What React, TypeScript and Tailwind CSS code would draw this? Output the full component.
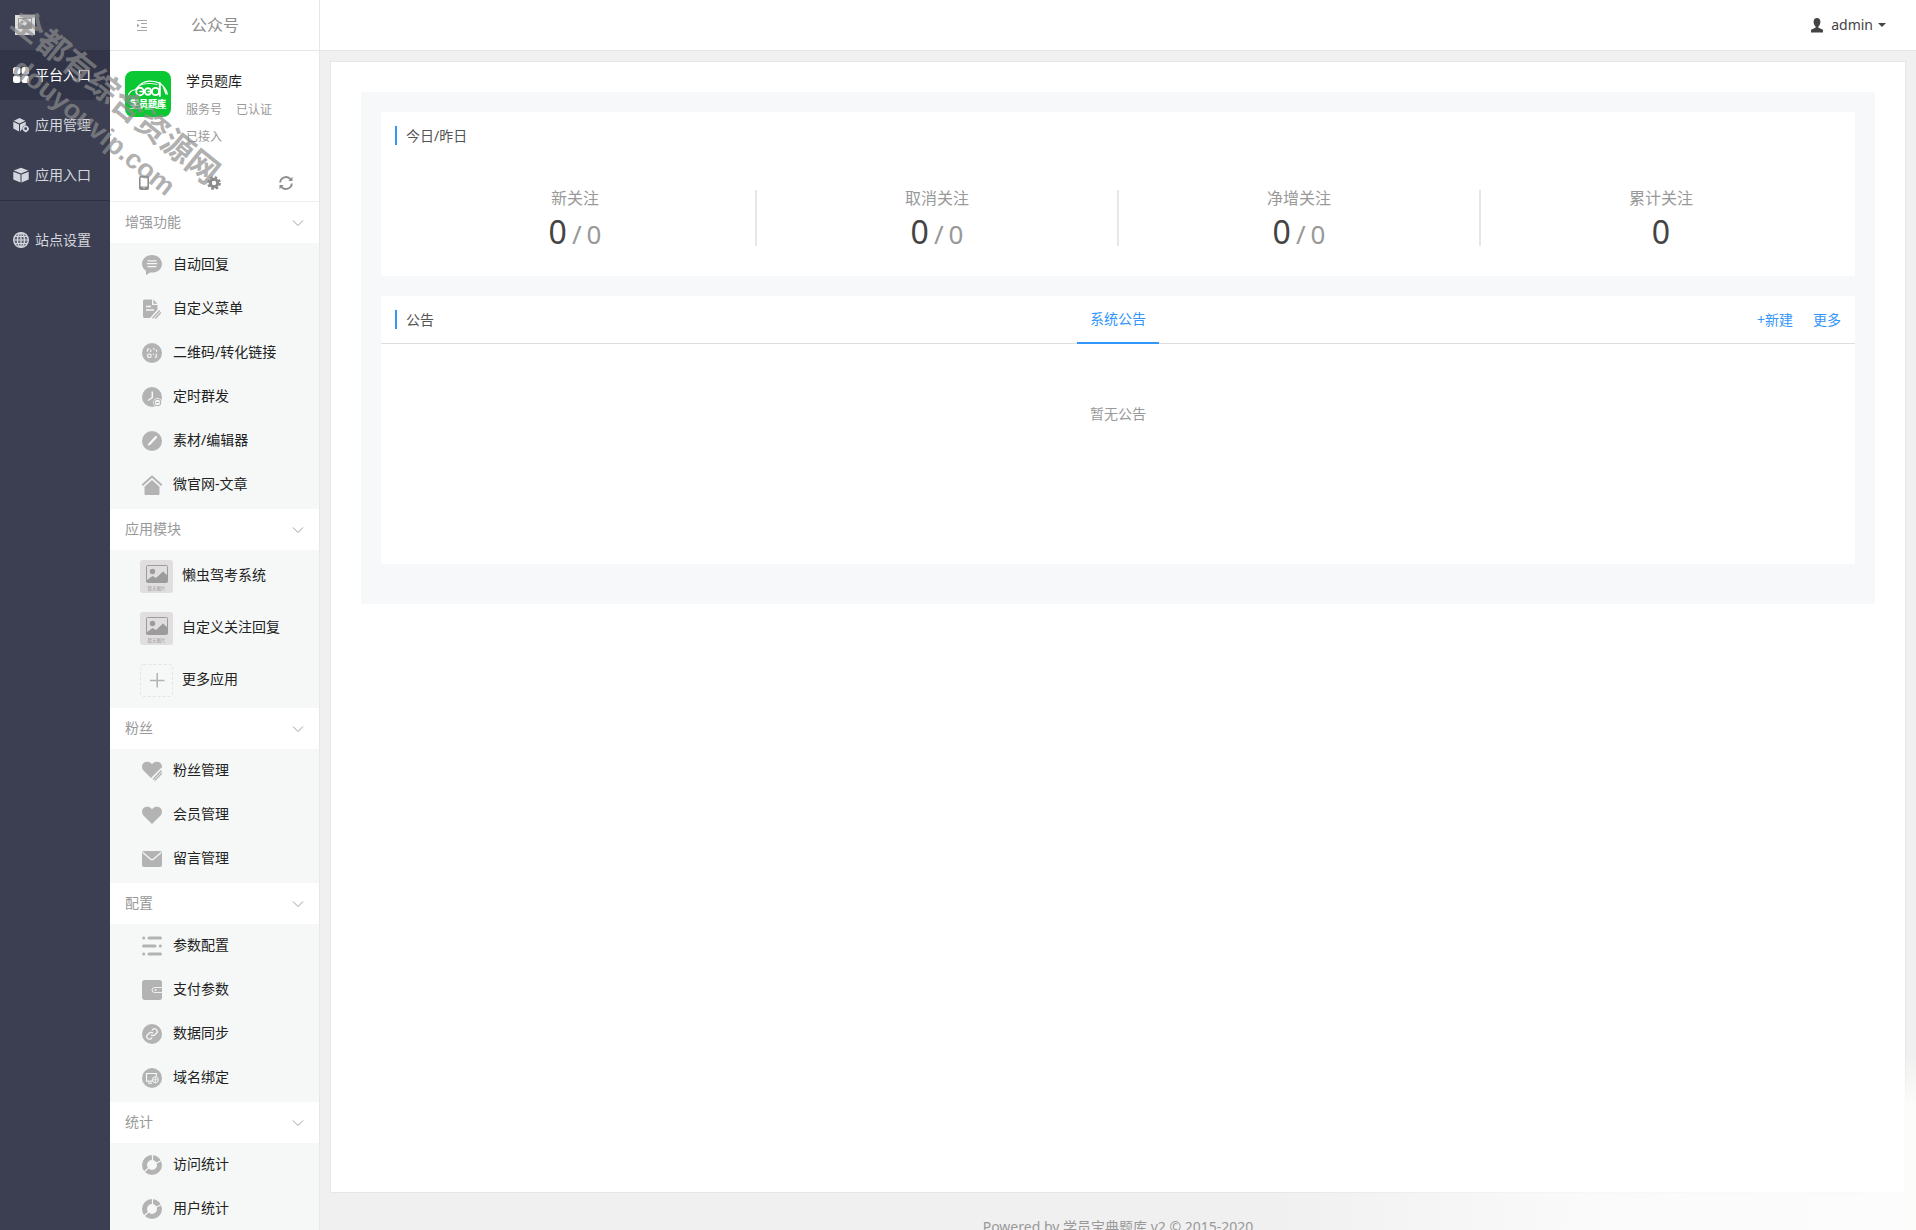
import type { ReactNode } from 'react';

type MenuItem = { label: string; icon: ReactNode };
type MenuSection = { title: string; items: MenuItem[]; tiles?: boolean };

const BG = '#f5f8f7';

function Icon({ children }: { children: ReactNode }) {
  return (
    <svg viewBox="0 0 20 20" className="h-5 w-5 shrink-0" fill="#b3b3b3">
      {children}
    </svg>
  );
}

const ChatIcon = (
  <Icon>
    <path d="M10 0C4.500 0 0 3.900 0 8.900c0 2.900 1.600 5.300 4 6.900V20l4.200-2.500c.6.100 1.200.1 1.800.1 5.500 0 10-3.800 10-8.700S15.500 0 10 0z" />
    <path d="M5.500 5.800h9M4.800 8.700h10.400M5.500 11.600h9" stroke={BG} strokeWidth="1.300" />
  </Icon>
);

const MenuEditIcon = (
  <Icon>
    <path d="M1 2a1.500 1.500 0 0 1 1.500-1.500H10V6h5.500v4.500L8 19H2.500A1.500 1.500 0 0 1 1 17.500z" />
    <path d="M11.300.5l4.200 4.200h-4.200z" />
    <path d="M4 7.500h5M4 11h8" stroke={BG} strokeWidth="1.300" />
    <path d="M17.800 11.500l-7.300 7.700M18.800 13.500l-5.600 6" stroke="#b3b3b3" strokeWidth="1.400" />
  </Icon>
);

const QrIcon = (
  <Icon>
    <circle cx="10" cy="10" r="10" />
    <g fill="none" stroke={BG} strokeWidth="1.200">
      <path d="M5.500 8.800V7.500A1.800 1.800 0 0 1 7.300 5.600M8.700 6.500V9M11 5.500l1.500 1M14.500 6.500v2.300" />
      <rect x="5.700" y="11" width="3.300" height="3.500" rx="1.200" />
      <path d="M14.300 10.800v2.700c0 .8-.5 1.200-1.500 1.200M11.500 10.800v1" />
    </g>
  </Icon>
);

const ClockIcon = (
  <Icon>
    <circle cx="10" cy="10" r="10" />
    <path d="M10.300 4.500v6L6 13.500" fill="none" stroke={BG} strokeWidth="1.500" />
    <circle cx="15.500" cy="15.500" r="4.400" fill={BG} />
    <circle cx="15.500" cy="15.500" r="3.200" fill="none" stroke="#b3b3b3" strokeWidth="1.100" />
    <path d="M13.800 15.500h3.400" stroke="#b3b3b3" strokeWidth="1.100" />
  </Icon>
);

const PencilIcon = (
  <Icon>
    <circle cx="10" cy="10" r="10" />
    <path d="M7.500 13L14 6.200" stroke={BG} strokeWidth="2.400" strokeLinecap="round" />
    <path d="M5.500 14.800l.7-2.300 1.600 1.600z" fill={BG} />
  </Icon>
);

const HouseIcon = (
  <Icon>
    <path d="M.8 9.800L10 1.500l9.200 8.300" fill="none" stroke="#b3b3b3" strokeWidth="2" strokeLinecap="round" />
    <path d="M10 5l7.500 6.700v7a1.300 1.300 0 0 1-1.300 1.300H3.800a1.300 1.300 0 0 1-1.300-1.300v-7z" />
  </Icon>
);

const heart = 'M10 19L1.500 10.500C-.5 8.200-.4 5 1.600 3.100c2.200-2.100 5.800-1.900 7.700.3l.7.900.7-.9c1.900-2.200 5.500-2.400 7.700-.3 2 1.900 2.100 5.100.1 7.400z';

const HeartIcon = (
  <Icon>
    <path d={heart} />
  </Icon>
);

const HeartEditIcon = (
  <Icon>
    <path d={heart} transform="translate(0 -1)" />
    <path d="M21 8.500L10 19.500" stroke={BG} strokeWidth="5" />
    <path d="M19.500 9.500L11 18.500M20 12l-7.300 7.500" stroke="#b3b3b3" strokeWidth="1.400" />
  </Icon>
);

const MailIcon = (
  <Icon>
    <rect y="2" width="20" height="16" rx="2" />
    <path d="M.8 3.500l7.600 6.600c1 .9 2.200.9 3.200 0l7.600-6.600" fill="none" stroke={BG} strokeWidth="1.300" />
  </Icon>
);

const SlidersIcon = (
  <Icon>
    <g stroke="#b3b3b3" strokeWidth="3" strokeLinecap="round">
      <path d="M1.700 2h.1M7 2h11.500M1.500 10H13M18.300 10h.1M1.700 18h.1M7 18h11.500" />
    </g>
  </Icon>
);

const WalletIcon = (
  <Icon>
    <path d="M3 0h14.500A2.500 2.500 0 0 1 20 2.500v15a2.500 2.500 0 0 1-2.500 2.500H3a3 3 0 0 1-3-3V3a3 3 0 0 1 3-3z" />
    <path d="M20 7.500h-7.500a2.500 2.500 0 0 0 0 5H20" fill="none" stroke={BG} strokeWidth=".9" />
    <circle cx="13.500" cy="10" r=".9" fill={BG} />
  </Icon>
);

const LinkIcon = (
  <Icon>
    <circle cx="10" cy="10" r="10" />
    <g transform="translate(10 10) scale(.52) translate(-12 -12)" fill="none" stroke={BG} strokeWidth="2.400">
      <path d="M10 13a5 5 0 0 0 7.540.54l3-3a5 5 0 0 0-7.070-7.070l-1.720 1.710" />
      <path d="M14 11a5 5 0 0 0-7.540-.54l-3 3a5 5 0 0 0 7.070 7.070l1.710-1.710" />
    </g>
  </Icon>
);

const DomainIcon = (
  <Icon>
    <circle cx="10" cy="10" r="10" />
    <path d="M10 13.200H4.500V5.500h9.800v3M6 15.200h4" fill="none" stroke={BG} strokeWidth="1.200" />
    <circle cx="13.300" cy="11.800" r="3" fill="#b3b3b3" stroke={BG} />
    <path d="M10.500 11.800h5.600M13.300 9v5.600" stroke={BG} strokeWidth=".8" />
  </Icon>
);

const DonutIcon = (
  <Icon>
    <circle cx="10" cy="10" r="7.500" fill="none" stroke="#b3b3b3" strokeWidth="5" />
    <path d="M10.500 0v6M13.500 8.500l6-3M6.500 13l-4.500 4" stroke={BG} strokeWidth="1.200" />
  </Icon>
);

function PlaceholderTile() {
  return (
    <svg viewBox="0 0 33 33" className="h-[33px] w-[33px] shrink-0">
      <rect width="33" height="33" rx="3" fill="#e0dedf" />
      <rect x="6.500" y="5.500" width="21" height="17" rx="1" fill="none" stroke="#9c9c9c" />
      <circle cx="12.500" cy="11.500" r="2.700" fill="#9c9c9c" />
      <path d="M6.500 22v-1.500l6-4.500 3.500 2 7-6.500 4.500 4V22z" fill="#9c9c9c" />
      <text x="16.500" y="30" textAnchor="middle" fontSize="4.500" fill="#999">暂无图片</text>
    </svg>
  );
}

function PlusTile() {
  return (
    <svg viewBox="0 0 33 33" className="h-[33px] w-[33px] shrink-0" fill="none">
      <rect x=".5" y=".5" width="32" height="32" rx="3" stroke="#e2e5e4" strokeDasharray="3 2" />
      <path d="M10 16.500h14.500M17.200 9v14.500" stroke="#b3b3b3" strokeWidth="1.500" />
    </svg>
  );
}

const sections: MenuSection[] = [
  {
    title: '增强功能',
    items: [
      { label: '自动回复', icon: ChatIcon },
      { label: '自定义菜单', icon: MenuEditIcon },
      { label: '二维码/转化链接', icon: QrIcon },
      { label: '定时群发', icon: ClockIcon },
      { label: '素材/编辑器', icon: PencilIcon },
      { label: '微官网-文章', icon: HouseIcon },
    ],
  },
  {
    title: '应用模块',
    tiles: true,
    items: [
      { label: '懒虫驾考系统', icon: <PlaceholderTile /> },
      { label: '自定义关注回复', icon: <PlaceholderTile /> },
      { label: '更多应用', icon: <PlusTile /> },
    ],
  },
  {
    title: '粉丝',
    items: [
      { label: '粉丝管理', icon: HeartEditIcon },
      { label: '会员管理', icon: HeartIcon },
      { label: '留言管理', icon: MailIcon },
    ],
  },
  {
    title: '配置',
    items: [
      { label: '参数配置', icon: SlidersIcon },
      { label: '支付参数', icon: WalletIcon },
      { label: '数据同步', icon: LinkIcon },
      { label: '域名绑定', icon: DomainIcon },
    ],
  },
  {
    title: '统计',
    items: [
      { label: '访问统计', icon: DonutIcon },
      { label: '用户统计', icon: DonutIcon },
    ],
  },
];

const stats = [
  { label: '新关注', today: 0, yesterday: 0 },
  { label: '取消关注', today: 0, yesterday: 0 },
  { label: '净增关注', today: 0, yesterday: 0 },
  { label: '累计关注', today: 0 },
];

const navItems = [
  {
    label: '平台入口',
    active: true,
    icon: (
      <g>
        <rect width="7.500" height="7.500" rx="2.500" />
        <rect x="8.500" width="7.500" height="7.500" rx="2.500" />
        <rect y="8.500" width="7.500" height="7.500" rx="2.500" />
        <rect x="8.500" y="8.500" width="7.500" height="7.500" rx="2.500" />
      </g>
    ),
  },
  {
    label: '应用管理',
    icon: (
      <g>
        <path d="M6.500 1l5.800 2.700-5.800 2.800L.8 3.700z" />
        <path d="M.3 4.700L6 7.500v6.900L.3 11.500zM7 7.500l5.700-2.800v3.500l-2.500 1-1.400 3.300L7 14.400z" />
        <circle cx="12.700" cy="11.700" r="2.200" fill="none" stroke="currentColor" strokeWidth="1.600" />
        <path d="M12.700 8.500v1M12.700 14v1.200M9.500 11.700h1M15 11.700h1" stroke="currentColor" strokeWidth="1.600" />
      </g>
    ),
  },
  {
    label: '应用入口',
    icon: (
      <g>
        <path d="M8 .8l7.300 2.800L8 6.500.7 3.600z" />
        <path d="M.3 4.700l7.200 2.900v7.900L.3 12.600zM15.700 4.700L8.500 7.600v7.900l7.200-2.900z" />
      </g>
    ),
  },
];

function NavLink({ label, active, icon }: { label: string; active?: boolean; icon: ReactNode }) {
  return (
    <a
      href="#"
      className={`flex h-[50px] items-center gap-1.5 pl-[13px] ${active ? 'bg-[#313547] text-white' : 'text-[#d5d7de]'}`}
    >
      <svg viewBox="0 0 16 16" className="h-4 w-4 shrink-0" fill="currentColor">
        {icon}
      </svg>
      {label}
    </a>
  );
}

function NavBar() {
  return (
    <nav className="w-[110px] shrink-0 bg-[#3b3f51]">
      <a href="#" aria-label="首页" className="flex h-[50px] items-center pl-[15px]">
        <svg viewBox="0 0 20 20" className="h-5 w-5">
          <rect width="20" height="20" fill="#dedede" />
          <rect x="3.500" y="3.500" width="13" height="10" fill="none" stroke="#9c9c9c" />
          <circle cx="7" cy="7" r="1.600" fill="#9c9c9c" />
          <path d="M4 13v-1l4-2.500 2 1 4-3.500 2.500 2.500V13z" fill="#9c9c9c" />
        </svg>
      </a>
      {navItems.map((item) => (
        <NavLink key={item.label} {...item} />
      ))}
      <div className="border-t border-[#2c3041] pt-3.5">
        <NavLink
          label="站点设置"
          icon={
            <g>
              <circle cx="8" cy="8" r="7.300" fillOpacity=".25" stroke="currentColor" strokeWidth="1.400" />
              <g fill="none" stroke="currentColor" strokeWidth="1.200">
                <ellipse cx="8" cy="8" rx="3.500" ry="7" />
                <path d="M8 .8v14.400M1 8h14M2 4.500h12M2 11.500h12" />
              </g>
            </g>
          }
        />
      </div>
    </nav>
  );
}

function AccountLogo() {
  return (
    <svg viewBox="0 0 46 46" className="h-[46px] w-[46px] shrink-0">
      <rect width="46" height="46" rx="8" fill="#0ac834" />
      <g fill="none" stroke="#fff" strokeLinecap="round">
        <path d="M3.500 24c.5-3 3-4.500 7-5.500C15 13 18 10.500 24 10.200c6-.2 12 2 15 6 1.500 2 3 5 3.300 7" strokeWidth="1.200" />
        <path d="M13 15.500c4-3 12-4 19-2" strokeWidth=".9" />
        <circle cx="15" cy="20.500" r="3.800" strokeWidth="1.900" />
        <circle cx="23" cy="20.500" r="3.200" strokeWidth="1.900" />
        <circle cx="30.500" cy="20.500" r="3.600" strokeWidth="1.900" />
        <path d="M34.800 12v13" strokeWidth="2" />
        <path d="M15 20.500h3.500M23 20.500h4M38.500 16l2.500 7" strokeWidth="1.300" />
        <path d="M5 37.500h12M20 38h8M31 37.500h10" strokeWidth=".7" />
      </g>
      <text x="23" y="35.500" textAnchor="middle" fontSize="9" fontWeight="900" fill="#fff">
        学员题库
      </text>
    </svg>
  );
}

function SideMenu() {
  return (
    <aside className="w-[210px] shrink-0 border-r border-[#e7e7e7] bg-white">
      <div className="flex h-[51px] items-center gap-11 border-b border-[#e7e7e7] pl-[27px] text-base text-[#8c8c8c]">
        <button type="button" aria-label="收起菜单">
          <svg viewBox="0 0 10 11" className="h-[11px] w-2.5" fill="none" stroke="#a6a6a6">
            <path d="M0 .5h10M4 3.500h6M4 7.500h6M0 10.500h10" />
            <path d="M0 3.500l2.500 2L0 7.500z" fill="#a6a6a6" stroke="none" />
          </svg>
        </button>
        <span>公众号</span>
      </div>

      <div className="flex h-[151px] flex-col justify-between border-b border-[#f0f0f0] pb-[11px] pl-[15px] pt-5">
        <div className="flex gap-[15px]">
          <AccountLogo />
          <div className="text-xs text-[#999]">
            <p className="text-sm leading-5 text-[#222]">学员题库</p>
            <p className="mt-[5px] flex gap-3.5 leading-[27px]">
              <span>服务号</span>
              <span>已认证</span>
            </p>
            <p className="leading-[27px]">已接入</p>
          </div>
        </div>
        <div className="flex items-center justify-between pl-3.5 pr-[26px] text-[#8c8c8c]">
          <button type="button" aria-label="手机预览">
            <svg viewBox="0 0 10 14" className="h-3.5 w-2.5">
              <rect x=".8" y=".8" width="8.400" height="12.400" rx="1" fill="#fff" stroke="currentColor" strokeWidth="1.600" />
              <path d="M1 10.500h8V13H1z" fill="currentColor" />
              <circle cx="5" cy="11.800" r=".7" fill="#fff" />
            </svg>
          </button>
          <button type="button" aria-label="设置">
            <svg viewBox="0 0 14 14" className="h-3.5 w-3.5" fill="none" stroke="currentColor">
              <circle cx="7" cy="7" r="3.700" strokeWidth="3" />
              <circle cx="7" cy="7" r="5.700" strokeWidth="2.400" strokeDasharray="2.500 1.977" />
            </svg>
          </button>
          <button type="button" aria-label="刷新">
            <svg viewBox="0 0 14 14" className="h-3.5 w-3.5" fill="none" stroke="currentColor" strokeWidth="1.900">
              <path d="M1.200 6.500A5.800 5.800 0 0 1 11.500 3.200M12.800 7.500A5.800 5.800 0 0 1 2.500 10.800" />
              <path d="M13.500.8V5H9.300zM.5 13.200V9h4.200z" fill="currentColor" stroke="none" />
            </svg>
          </button>
        </div>
      </div>

      {sections.map((section) => (
        <section key={section.title}>
          <button type="button" className="flex h-[41px] w-full items-center justify-between px-[15px] text-[#999]">
            <span className="pb-0.5">{section.title}</span>
            <svg viewBox="0 0 12 8" className="h-2 w-3" fill="none" stroke="#a0a0a0">
              <path d="M1 1.500l5 5 5-5" />
            </svg>
          </button>
          <ul className="bg-[#f5f8f7] pb-0.5">
            {section.items.map((item) => (
              <li key={item.label}>
                <a
                  href="#"
                  className={`flex items-center text-[#222] ${section.tiles ? 'h-[52px] gap-[9px] pl-[30px]' : 'h-11 gap-[11px] pl-8'}`}
                >
                  {item.icon}
                  <span className="pb-0.5">{item.label}</span>
                </a>
              </li>
            ))}
          </ul>
        </section>
      ))}
    </aside>
  );
}

function CardTitle({ children }: { children: ReactNode }) {
  return <h2 className="border-l-2 border-[#3296fa] pl-[9px] leading-[19px] text-[#555]">{children}</h2>;
}

function StatsCard() {
  return (
    <div className="h-[164px] bg-white pt-3.5">
      <div className="px-3.5">
        <CardTitle>今日/昨日</CardTitle>
      </div>
      <div className="ml-3.5 mr-3 mt-[45px] grid grid-cols-4">
        {stats.map((stat) => (
          <div
            key={stat.label}
            className="flex h-14 flex-col items-center border-r-2 border-[#e7e7e7] text-[#999] last:border-transparent"
          >
            <span className="text-base leading-4">{stat.label}</span>
            <div className="flex items-baseline gap-[5px] text-[26px] leading-[52px]">
              <span className="text-[32px] text-[#444]">{stat.today}</span>
              {stat.yesterday !== undefined && (
                <>
                  <span>/</span>
                  <span>{stat.yesterday}</span>
                </>
              )}
            </div>
          </div>
        ))}
      </div>
    </div>
  );
}

function NoticeCard() {
  return (
    <div className="h-[268px] bg-white">
      <div className="grid h-12 grid-cols-3 items-center border-b border-[#dcdfe0] px-3.5">
        <CardTitle>公告</CardTitle>
        <button
          type="button"
          className="-mb-px h-12 justify-self-center border-b-2 border-[#3296fa] px-[13px] text-[#3296fa]"
        >
          系统公告
        </button>
        <div className="flex justify-end gap-5 text-[#3296fa]">
          <a href="#">+新建</a>
          <a href="#">更多</a>
        </div>
      </div>
      <p className="pt-[60px] text-center text-[#999]">暂无公告</p>
    </div>
  );
}

function Watermark() {
  return (
    <div aria-hidden="true" className="pointer-events-none absolute inset-0 font-bold leading-10 text-[#8d8d8d]/70">
      <div className="absolute -left-3 top-[76px] w-64 rotate-[39deg] whitespace-nowrap text-center text-[32px]">
        全都有综合资源网
      </div>
      <div className="absolute -left-[34px] top-[107px] w-64 rotate-[39deg] whitespace-nowrap text-center font-['Liberation_Sans',sans-serif] text-[27px]">
        douyouvip.com
      </div>
    </div>
  );
}

export default function App() {
  return (
    <div className="relative flex h-screen overflow-hidden bg-[#f0f0f0] font-['Noto_Sans','Noto_Sans_CJK_SC',sans-serif] text-sm">
      <NavBar />
      <SideMenu />
      <div className="flex min-w-0 flex-1 flex-col">
        <header className="flex h-[51px] shrink-0 items-center justify-end border-b border-[#e7e7e7] bg-white pr-[30px]">
          <button type="button" className="flex items-center text-[#444]">
            <svg viewBox="0 0 12 15" className="mr-2 h-[15px] w-3" fill="currentColor">
              <path d="M6 0C3.800 0 2.600 1.600 2.600 3.800c0 2 .8 3.700 1.900 4.500v1.500L1 11.300C.3 11.700 0 12 0 12.800V14.500h12v-1.700c0-.8-.3-1.100-1-1.500L7.500 9.800V8.300c1.100-.8 1.900-2.500 1.900-4.500C9.400 1.600 8.200 0 6 0z" />
            </svg>
            admin
            <span className="ml-[5px] border-x-4 border-t-4 border-x-transparent border-t-[#444]" />
          </button>
        </header>
        <main className="mx-2.5 mt-2.5 min-h-0 flex-1 border border-[#e7e7e7] bg-white p-[30px]">
          <div className="flex flex-col gap-5 bg-[#f6f8fa] px-5 pb-10 pt-5">
            <StatsCard />
            <NoticeCard />
          </div>
        </main>
        <footer className="h-[37px] shrink-0 overflow-hidden pt-6 text-center text-[#999]">
          Powered by 学员宝典题库 v2 © 2015-2020
        </footer>
      </div>
      {/* light haze in the bottom right corner */}
      <div className="pointer-events-none absolute bottom-0 right-0 h-10 w-[646px] bg-linear-to-r from-transparent via-white/70 to-white/80" />
      <div className="pointer-events-none absolute bottom-0 right-0 h-44 w-3 bg-linear-to-b from-transparent to-[#fcfcfa] to-30%" />
      <Watermark />
    </div>
  );
}
